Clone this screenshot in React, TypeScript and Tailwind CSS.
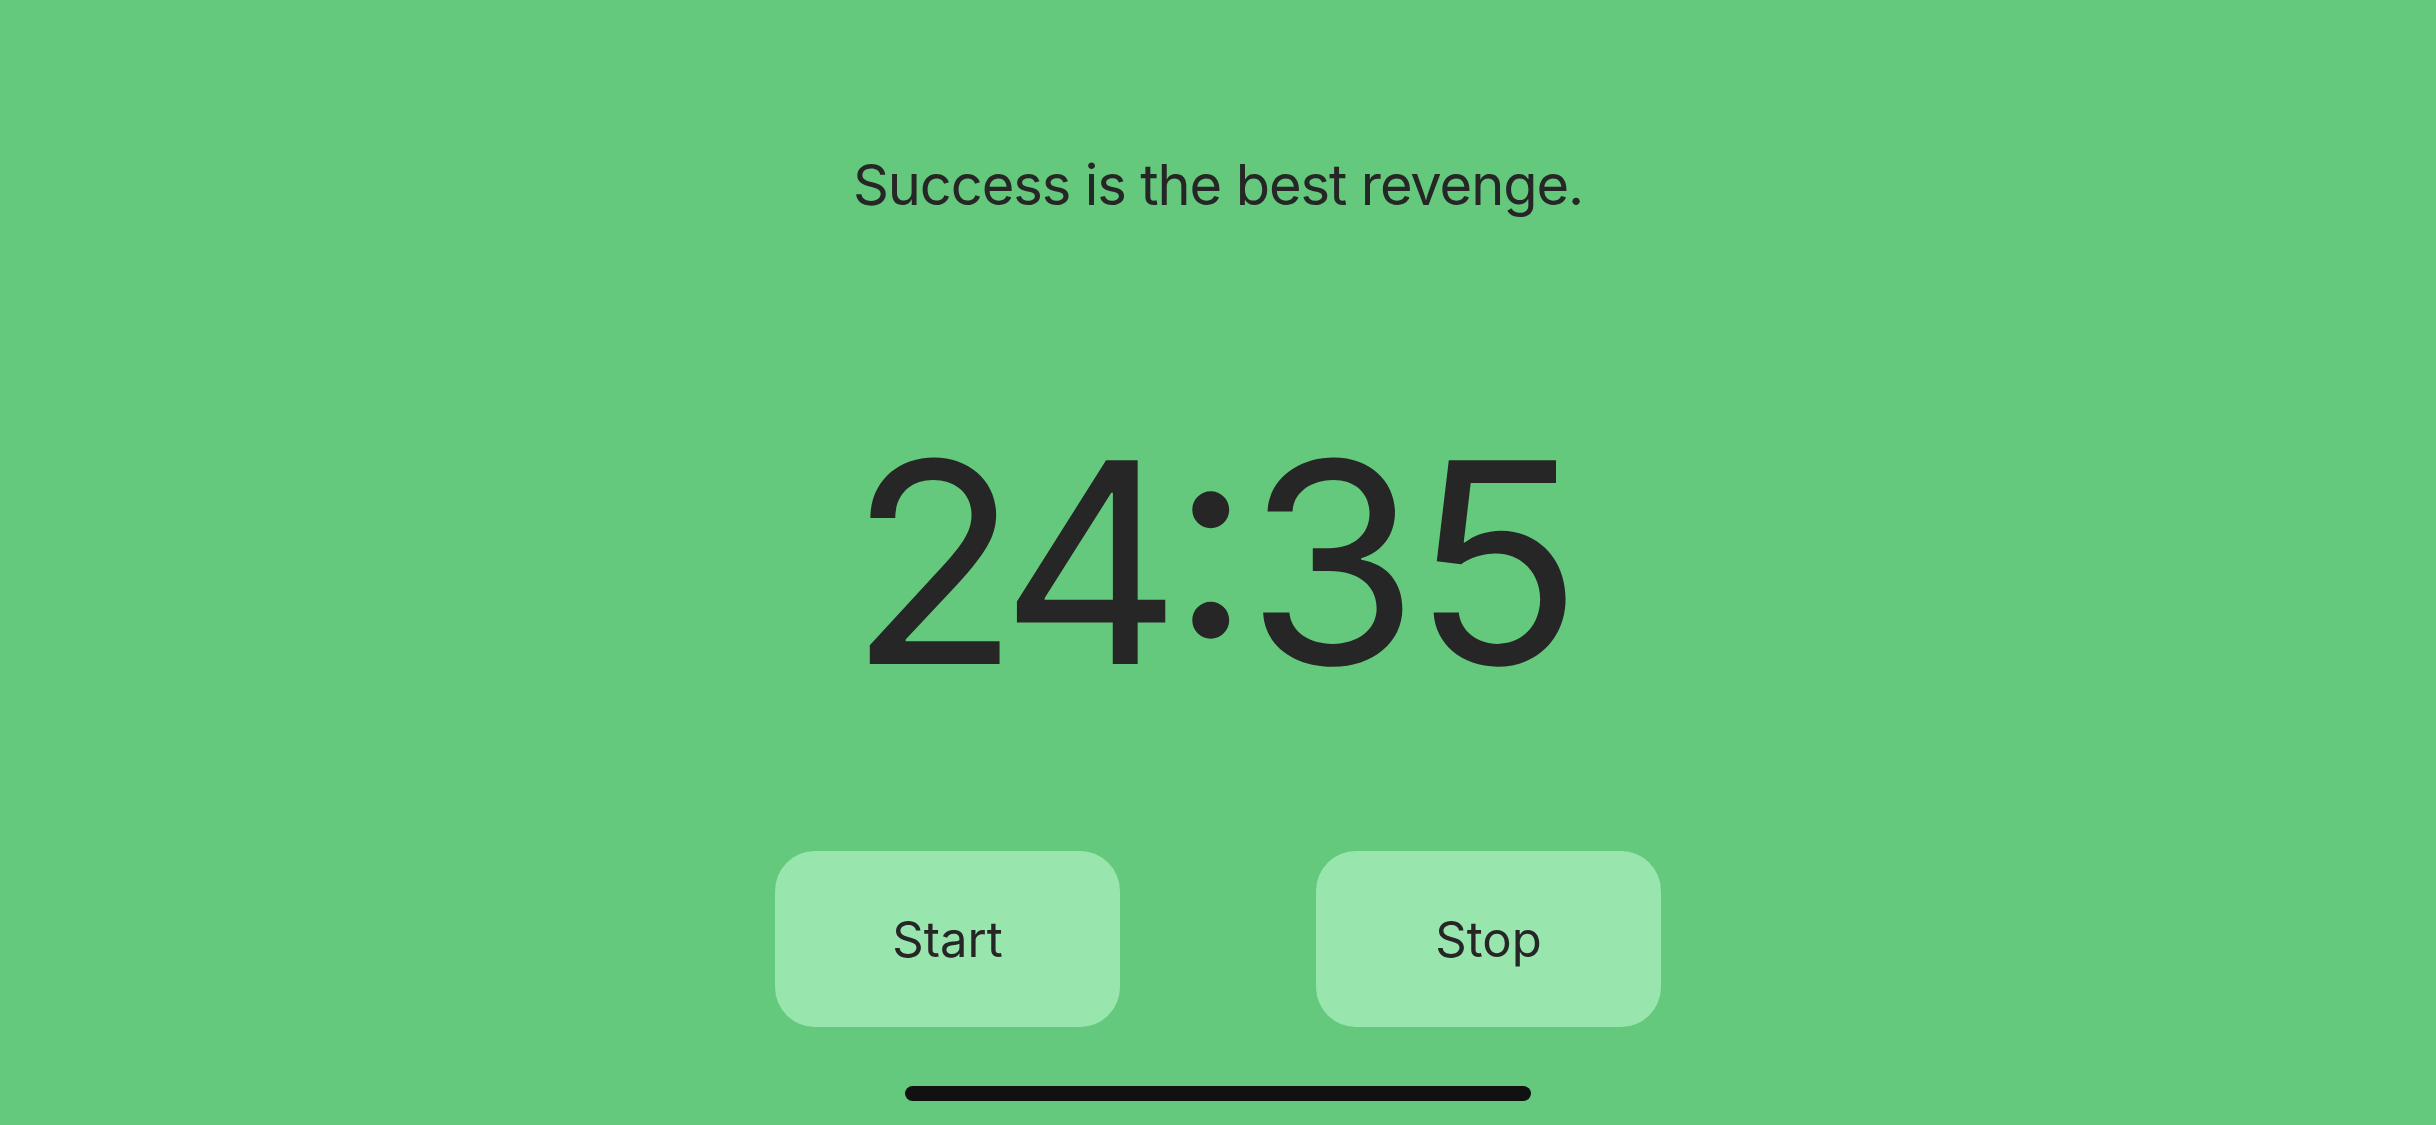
import React from "react";

export default function App() {
  return (
    <div
      className="w-[2436px] h-[1125px] bg-[#64c97c] flex flex-col items-center text-[#262626] overflow-hidden"
      style={{ fontFamily: "Inter, 'Noto Sans', sans-serif" }}
    >
      <p className="mt-[157px] text-[56px] leading-none tracking-[-1.1px]">Success is the best revenge.</p>
      <div className="mt-[210px] ml-[-8px] text-[280px] leading-none font-normal tracking-[-3px]">
        <span className="mr-[-16px]">2</span>4
        <span className="inline-block -translate-y-[27px] ml-[-8px] mr-[-2px]">:</span>
        <span className="mr-[-4px]">3</span>5
      </div>
      <div className="mt-[148px] flex gap-[196px]">
        <button className="w-[345px] h-[176px] rounded-[40px] bg-[#98e6ae] text-[49px] leading-none text-[#262626]">
          Start
        </button>
        <button className="w-[345px] h-[176px] rounded-[40px] bg-[#98e6ae] text-[49px] leading-none text-[#262626]">
          Stop
        </button>
      </div>
      <div className="mt-[59px] w-[626px] h-[15px] rounded-full bg-[#111111]" />
    </div>
  );
}
